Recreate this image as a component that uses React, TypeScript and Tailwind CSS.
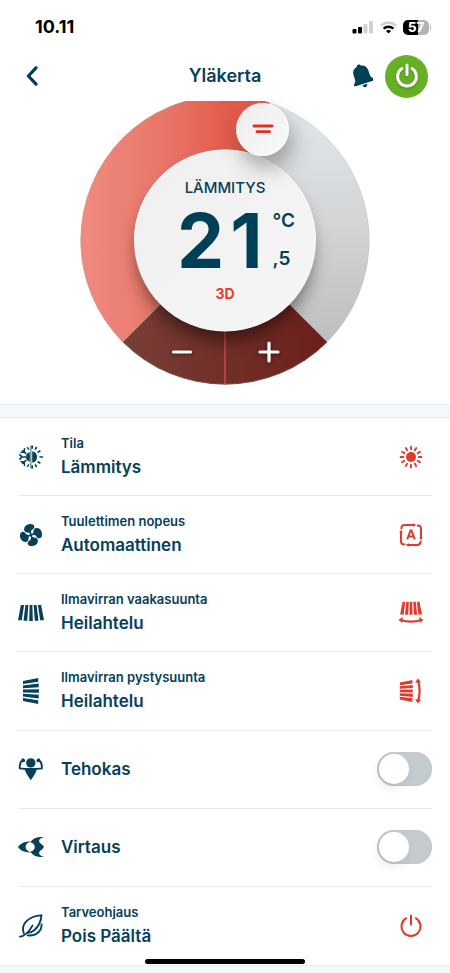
import { useState, type ReactNode } from "react";

const FONT = "font-['Inter','Liberation_Sans',sans-serif]";

function StatusBar() {
  return (
    <div className="flex h-[54px] shrink-0 items-center justify-between pl-[35px] pr-[19px] text-black">
      <span className="text-[18px] leading-6 font-bold">10.11</span>
      <div className="flex items-center gap-[6px]">
        <svg width="22" height="14" viewBox="0 0 22 14" aria-hidden="true">
          <rect x="0.5" y="9" width="4" height="4.5" rx="1" />
          <rect x="6" y="7" width="4" height="6.5" rx="1" />
          <rect x="11.5" y="4" width="4" height="9.5" rx="1" fill="#d2d2d2" />
          <rect x="17" y="1" width="4" height="12.5" rx="1" fill="#d2d2d2" />
        </svg>
        <svg width="17" height="13" viewBox="0 0 17 13" fill="none" strokeWidth="2.4" aria-hidden="true">
          <path d="M1 4.6C5.2.6 11.8.6 16 4.6" stroke="#cfcfcf" />
          <path d="M3.6 7.6c2.8-2.5 7-2.5 9.8 0" stroke="#000" />
          <path d="M8.5 12.6 5.9 10c1.4-1.3 3.8-1.3 5.2 0z" fill="#000" />
        </svg>
        <div className="flex items-center gap-px">
          <div className="flex h-[15px] w-[26px] items-center justify-center rounded-[5px] bg-[linear-gradient(90deg,#000_57%,#b4b4b4_57%)] text-[13px] leading-none font-extrabold text-white">
            57
          </div>
          <div className="h-[5px] w-px rounded-r-full bg-[#b4b4b4]" />
        </div>
      </div>
    </div>
  );
}

function Header() {
  return (
    <header className="grid h-11 shrink-0 grid-cols-[1fr_auto_1fr] items-center px-[22px]">
      <button type="button" aria-label="Takaisin" className="flex h-11 w-5 items-center justify-center">
        <svg width="12" height="20" viewBox="0 0 12 20" fill="none" stroke="#003f58" strokeWidth="3.2">
          <path d="M10 1.800 2.400 10l7.600 8.200" strokeLinecap="round" strokeLinejoin="round" />
        </svg>
      </button>
      <h1 className="text-[18px] leading-6 font-semibold">Yläkerta</h1>
      <div className="flex items-center justify-end gap-3">
        <button type="button" aria-label="Ilmoitukset">
          <svg width="22" height="26" viewBox="0 0 22 26" fill="#003f58">
            <g transform="rotate(-18 11 13)">
              <circle cx="11" cy="3.200" r="2.200" />
              <path d="M11 2.400c-5 0-7.800 3-7.800 7.400v4.400c0 2-.8 3.100-2.200 4.200-.8.6-.6 2.400.8 2.400h18.400c1.400 0 1.600-1.800.8-2.400-1.400-1.100-2.200-2.200-2.200-4.200V9.800c0-4.400-2.800-7.400-7.800-7.400z" />
              <path d="M8.600 22h4.800c-.1 1.700-1.100 2.700-2.400 2.700S8.700 23.700 8.600 22z" />
            </g>
          </svg>
        </button>
        <button
          type="button"
          aria-label="Virta"
          className="flex size-[43px] items-center justify-center rounded-full bg-[#65b023]"
        >
          <svg width="24" height="26" viewBox="0 0 24 26" fill="none" stroke="#fff" strokeWidth="3" strokeLinecap="round" className="drop-shadow-[0_1px_1px_rgba(0,0,0,0.25)]">
            <path d="M12 2v9.500" />
            <path d="M7 5.600a9.400 9.400 0 1 0 10 0" />
          </svg>
        </button>
      </div>
    </header>
  );
}

function Dial() {
  const [temp, setTemp] = useState(21.5);
  const whole = Math.floor(temp);
  const tenth = Math.round((temp - whole) * 10);
  return (
    <section className="shrink-0 pt-[3px] pb-[19px]">
      <div className="relative mx-auto h-[284px] w-[290px]">
        <svg className="absolute inset-0" width="290" height="284" viewBox="80 101 290 284" aria-hidden="true">
          <defs>
            <linearGradient id="warm" gradientUnits="userSpaceOnUse" x1="80" y1="0" x2="262" y2="0">
              <stop offset="0" stopColor="#ef8b7f" />
              <stop offset="0.45" stopColor="#e87769" />
              <stop offset="0.82" stopColor="#e25a4c" />
              <stop offset="1" stopColor="#e25b50" />
            </linearGradient>
            <linearGradient id="cool" gradientUnits="userSpaceOnUse" x1="0" y1="101" x2="0" y2="342">
              <stop offset="0" stopColor="#e2e8ed" />
              <stop offset="0.5" stopColor="#d3d5d7" />
              <stop offset="1" stopColor="#bcbebf" />
            </linearGradient>
            <linearGradient id="dark" gradientUnits="userSpaceOnUse" x1="123" y1="0" x2="327" y2="0">
              <stop offset="0" stopColor="#783e37" />
              <stop offset="0.5" stopColor="#722f29" />
              <stop offset="1" stopColor="#6c1f1a" />
            </linearGradient>
            <linearGradient id="disc" x1="0" y1="0" x2="1" y2="1">
              <stop offset="0" stopColor="#efefef" />
              <stop offset="1" stopColor="#f6f6f6" />
            </linearGradient>
            <filter id="soft" x="-30%" y="-30%" width="160%" height="160%">
              <feGaussianBlur stdDeviation="9" />
            </filter>
            <clipPath id="ring">
              <circle cx="225" cy="240" r="144.500" />
            </clipPath>
          </defs>
          <g clipPath="url(#ring)">
            <rect x="80" y="95" width="290" height="290" fill="url(#cool)" />
            <path d="M225 240 72 393V80h205z" fill="url(#warm)" />
            <path d="M225 240 72 393h306z" fill="url(#dark)" />
            <path d="M225 240v150" stroke="#b1443c" strokeWidth="2" />
            <circle cx="225" cy="253" r="87" fill="#000" opacity="0.5" filter="url(#soft)" />
            <circle cx="225" cy="240" r="144" fill="none" stroke="#a9b4c0" strokeWidth="1" opacity="0.2" />
          </g>
          <circle cx="225" cy="240.500" r="91" fill="url(#disc)" />
          <path d="M134.500 240.500a90.500 90.500 0 0 1 181 0" fill="none" stroke="#fff" strokeWidth="1" opacity="0.8" />
        </svg>

        <div className="absolute inset-x-0 top-[76px] flex flex-col items-center">
          <p className="text-[15px] leading-[22px] font-medium">LÄMMITYS</p>
          <div className="flex items-stretch gap-[10px] pl-[22px]">
            <span className="flex gap-[6px] text-[75px] leading-[84px] font-bold text-[#003f58]">
              {String(whole)
                .split("")
                .map((digit, i) => (
                  <span key={i}>{digit}</span>
                ))}
            </span>
            <span className="flex flex-col justify-between pt-[10px] pb-3 text-[19px] leading-6 font-semibold">
              <span>°C</span>
              <span>,{tenth}</span>
            </span>
          </div>
          <p className="text-[14px] leading-[22px] font-bold text-[#e63b2e]">3D</p>
        </div>

        <input
          type="range"
          aria-label="Tavoitelämpötila"
          min={16}
          max={30}
          step={0.5}
          value={temp}
          onChange={(e) => setTemp(Number(e.target.value))}
          className="absolute top-[2px] left-[156px] size-[53px] appearance-none rounded-full border border-white bg-linear-to-br from-[#ececec] to-[#fafafa] shadow-[4px_12px_20px_rgba(60,50,40,0.38)] [&::-webkit-slider-thumb]:appearance-none"
        />
        <svg className="pointer-events-none absolute top-[21px] left-[171px]" width="24" height="14" viewBox="0 0 24 14" stroke="#e02f26" strokeWidth="2.800" strokeLinecap="round" aria-hidden="true">
          <path d="M3 4h18M6 9.700h12.500" />
        </svg>
        <button
          type="button"
          aria-label="Vähennä"
          onClick={() => setTemp(temp - 0.5)}
          className="absolute top-[236px] left-[87px] flex size-[30px] items-center justify-center"
        >
          <svg width="22" height="22" viewBox="0 0 22 22" stroke="#fff" strokeWidth="3.200" strokeLinecap="round" className="drop-shadow-[0_1px_2px_rgba(0,0,0,0.5)]">
            <path d="M2.500 11h17" />
          </svg>
        </button>
        <button
          type="button"
          aria-label="Lisää"
          onClick={() => setTemp(temp + 0.5)}
          className="absolute top-[236px] left-[174px] flex size-[30px] items-center justify-center"
        >
          <svg width="22" height="22" viewBox="0 0 22 22" stroke="#fff" strokeWidth="3.200" strokeLinecap="round" className="drop-shadow-[0_1px_2px_rgba(0,0,0,0.5)]">
            <path d="M2 11h18M11 2v18" />
          </svg>
        </button>
      </div>
    </section>
  );
}

function Icon({ children }: { children: ReactNode }) {
  return (
    <svg width="26" height="26" viewBox="0 0 26 26" fill="currentColor" className="shrink-0" aria-hidden="true">
      {children}
    </svg>
  );
}

function ModeIcon() {
  return (
    <Icon>
      <path d="M14.200 7.200a5.900 5.900 0 0 1 0 11.600z" />
      <g stroke="currentColor" fill="none">
        <path d="M11.700 8.600C9.600 9 8.200 10.700 8.200 13s1.400 4 3.500 4.400z" fill="currentColor" strokeWidth=".5" />
        <path d="M12.900 1.600v22.800" strokeWidth=".8" />
        <path d="M14.200 1.600v3.200M18.600 3l-1.400 2.700M22.400 6.600l-2.800 1.900M25 13h-3.600M22.400 19.400l-2.800-1.900M18.600 23l-1.400-2.700M14.200 21.200v3.200" strokeWidth="1.700" />
        <path d="M2.600 13h5.400M1.400 10.400 4 13l-2.600 2.600M4 6.400l4.400 3.400M4 19.600l4.400-3.400M2.400 8.600l3.800-.6.400-3.800M2.400 17.400l3.800.6.400 3.800M9.200 3.200l1.800 2.400M9.200 22.800l1.800-2.400" strokeWidth="1.500" />
      </g>
    </Icon>
  );
}

function FanIcon() {
  const blade =
    "M12.500 12.400C12.300 11 11.600 10.300 10.200 9.900 8.200 9.300 7.200 8 7.400 6.200 7.700 3.600 10 1.900 13 1.900c2.900 0 5 1.300 5 3.300 0 1.600-1.100 2.300-2.500 2.800-1.500.6-2.100 1.900-2 4.400z";
  return (
    <Icon>
      <g transform="rotate(-12 13 13)">
        {[0, 90, 180, 270].map((angle) => (
          <path key={angle} d={blade} transform={`rotate(${angle} 13 13)`} />
        ))}
        <circle cx="13" cy="13" r="1.500" />
      </g>
    </Icon>
  );
}

function LouverBars() {
  return (
    <>
      <path d="M2.900 5h3.200L3.800 20.200H0z" />
      <path d="M7.400 5h2.900L9.200 20.700H5.500z" />
      <path d="M11.600 5h2.800l.4 15.900h-3.600z" />
      <path d="M15.700 5h2.900l1.900 15.700h-3.700z" />
      <path d="M19.900 5h3.200L26 20.200h-3.800z" />
    </>
  );
}

function HorizontalIcon() {
  return (
    <Icon>
      <LouverBars />
    </Icon>
  );
}

function VerticalIcon() {
  return (
    <Icon>
      <g transform="rotate(-90 13 13)">
        <LouverBars />
      </g>
    </Icon>
  );
}

function PowerfulIcon() {
  return (
    <Icon>
      <circle cx="12.800" cy="6.900" r="4.700" />
      <path d="M6.800 12h12c0 2.800-1.200 5-2.800 7.400l-3.200 4.800-3.200-4.800C8 17 6.800 14.800 6.800 12z" />
      <path
        d="M8 13.200c-2.200-.8-4.200-.4-6.200-.9C1.400 9.600 2.200 7 3.600 4.800M17.600 13.200c2.200-.8 4.200-.4 6.200-.9.400-2.700-.4-5.300-1.800-7.500"
        fill="none"
        stroke="currentColor"
        strokeWidth="1.900"
        strokeLinejoin="round"
      />
      <path d="M3.600 2.900c1.500-.7 3.200 0 3.500 1.300.3 1.100-.5 2.100-1.700 1.900L3 6.600zM22 2.900c-1.500-.7-3.200 0-3.500 1.300-.3 1.100.5 2.100 1.700 1.900l2.400.5z" />
    </Icon>
  );
}

function StreamerIcon() {
  return (
    <Icon>
      <path d="M0 13C2.500 9.600 6.500 7.400 12.600 7.600 9.200 8.900 7.600 10.800 7.600 13s1.600 4.100 5 5.400C6.500 18.600 2.500 16.400 0 13z" />
      <path d="M12.200 8.200C15 4 19.500 2.400 26 3c-3.800 1-5.400 2.800-4.800 4.700.6 1.800 3.400 2.500 4.800 5.300-1.400 2.800-4.200 3.500-4.800 5.300-.6 1.900 1 3.700 4.800 4.700-6.500.6-11-1-13.800-5.200 3-.8 4.600-2.600 4.600-4.800s-1.600-4-4.600-4.800z" />
    </Icon>
  );
}

function LeafIcon() {
  return (
    <Icon>
      <g fill="none" stroke="currentColor" strokeWidth="1.900" strokeLinecap="round" strokeLinejoin="round">
        <path d="M5.800 20.400C2.600 12.600 9 3 23.400 2.400" />
        <path d="M23.400 2.400C23 9 20.500 13.600 16.500 17c-2.400 2-4 2.800-7 2.800" />
        <path d="M2 23.600c4.500-.4 8.500-4 12.500-11" />
        <path d="M23.600 11.500c0 6.400-5.200 12-14 10.900" />
      </g>
    </Icon>
  );
}

function SunIcon() {
  return (
    <Icon>
      <circle cx="13" cy="13" r="5" />
      {Array.from({ length: 12 }, (_, i) => (
        <path
          key={i}
          d="M13 2.600v2.700"
          stroke="currentColor"
          strokeWidth="1.900"
          strokeLinecap="round"
          transform={`rotate(${i * 30} 13 13)`}
        />
      ))}
    </Icon>
  );
}

function AutoIcon() {
  return (
    <Icon>
      {[0, 90, 180, 270].map((angle) => (
        <g key={angle} transform={`rotate(${angle} 13 13)`}>
          <path d="M3.400 6.400C3.400 4 4.400 3 6.800 3h9.400" fill="none" stroke="currentColor" strokeWidth="2" strokeLinecap="round" />
          <path d="m15.400 1.600 2.400 1.400-2.400 1.400z" stroke="currentColor" strokeWidth=".4" strokeLinejoin="round" />
        </g>
      ))}
      <path d="m9.200 17.400 3.300-8.800h1l3.300 8.800M10.600 14.600h4.800" fill="none" stroke="currentColor" strokeWidth="2" />
    </Icon>
  );
}

function SwingBars() {
  return (
    <g transform="translate(0 .8)">
      <path d="M4.600 1h2.700L5.700 13.600H2.100z" />
      <path d="M8.300 1h2.500L10.200 14H7z" />
      <path d="M11.800 1h2.400l.3 13h-3z" />
      <path d="M15.300 1h2.500l1.300 13h-3.200z" />
      <path d="M18.800 1h2.700l2.500 12.600h-3.600z" />
      <path d="M3 19.400c6.500 1.800 13.500 1.800 20 0" fill="none" stroke="currentColor" strokeWidth="2.200" />
      <path d="m.8 19 3.800-2.200-.6 5zM25.200 19l-3.800-2.200.6 5z" stroke="currentColor" strokeWidth=".5" strokeLinejoin="round" />
    </g>
  );
}

function HorizontalSwingIcon() {
  return (
    <Icon>
      <SwingBars />
    </Icon>
  );
}

function VerticalSwingIcon() {
  return (
    <Icon>
      <g transform="rotate(-90 13 13)">
        <SwingBars />
      </g>
    </Icon>
  );
}

function PowerIcon() {
  return (
    <Icon>
      <g fill="none" stroke="currentColor" strokeWidth="2" strokeLinecap="round">
        <path d="M13 2.600v9" />
        <path d="M8.200 5.200a9.500 9.500 0 1 0 9.600 0" />
      </g>
    </Icon>
  );
}

const ROW = "flex min-h-[76px] w-full items-center gap-[17px] border-b border-[#e6ebee] last:border-b-0";

function SettingRow({ icon, label, value, state }: { icon: ReactNode; label: string; value: string; state: ReactNode }) {
  return (
    <button type="button" className={`${ROW} text-left`}>
      {icon}
      <span className="flex flex-1 flex-col">
        <span className="text-[13px] leading-5 font-semibold">{label}</span>
        <span className="text-[17px] leading-7 font-semibold">{value}</span>
      </span>
      <span className="pr-2 text-[#e03a2d]">{state}</span>
    </button>
  );
}

function ToggleRow({ icon, label }: { icon: ReactNode; label: string }) {
  const [on, setOn] = useState(false);
  return (
    <label className={ROW}>
      {icon}
      <span className="flex-1 text-[17px] leading-7 font-semibold">{label}</span>
      <input
        type="checkbox"
        checked={on}
        onChange={(e) => setOn(e.target.checked)}
        className="h-[34px] w-[55px] appearance-none rounded-full bg-[#c4cbcf] p-[2px] shadow-[inset_0_0_1px_#aab4b8] before:block before:size-[30px] before:rounded-full before:bg-white before:shadow-[-2px_4px_10px_rgba(0,0,0,0.08)] checked:bg-[#65b023] checked:before:translate-x-[21px]"
      />
    </label>
  );
}

export default function App() {
  return (
    <div className={`flex min-h-screen flex-col bg-white text-[#06405a] ${FONT}`}>
      <StatusBar />
      <Header />
      <Dial />
      <div className="h-[14px] shrink-0 border-y border-[#e6edf1] bg-[#f4f8fb]" />
      <main className="grid flex-1 auto-rows-fr px-[18px]">
        <SettingRow icon={<ModeIcon />} label="Tila" value="Lämmitys" state={<SunIcon />} />
        <SettingRow icon={<FanIcon />} label="Tuulettimen nopeus" value="Automaattinen" state={<AutoIcon />} />
        <SettingRow icon={<HorizontalIcon />} label="Ilmavirran vaakasuunta" value="Heilahtelu" state={<HorizontalSwingIcon />} />
        <SettingRow icon={<VerticalIcon />} label="Ilmavirran pystysuunta" value="Heilahtelu" state={<VerticalSwingIcon />} />
        <ToggleRow icon={<PowerfulIcon />} label="Tehokas" />
        <ToggleRow icon={<StreamerIcon />} label="Virtaus" />
        <SettingRow icon={<LeafIcon />} label="Tarveohjaus" value="Pois Päältä" state={<PowerIcon />} />
      </main>
      <div className="h-2 shrink-0 border-t border-[#e6edf1] bg-[#f4f8fb]" />
      <div className="fixed inset-x-0 bottom-[9px] mx-auto h-[5px] w-40 rounded-full bg-black" />
    </div>
  );
}
